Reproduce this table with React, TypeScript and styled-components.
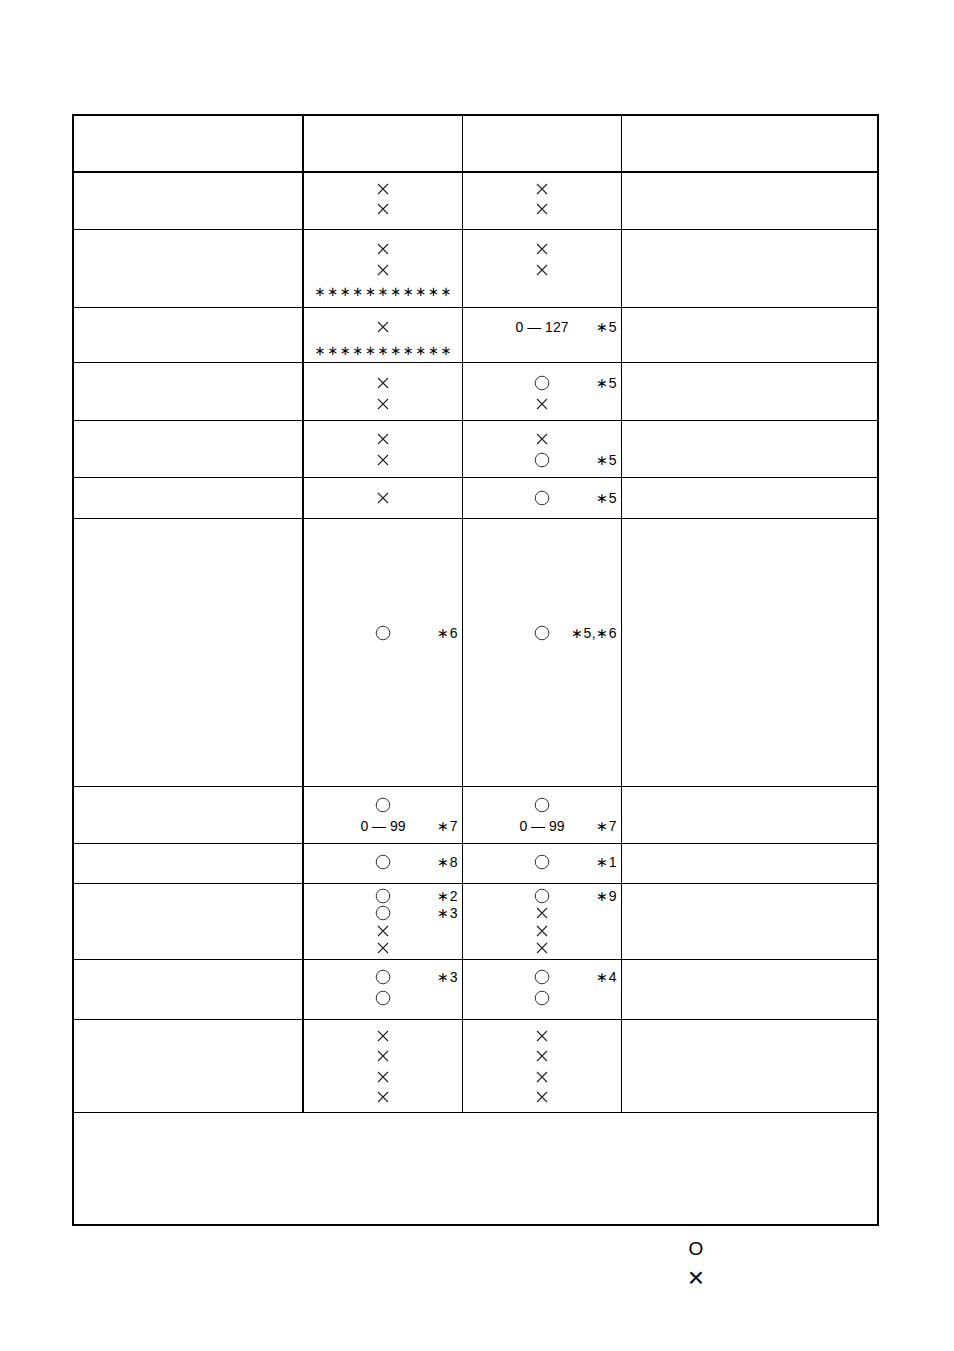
import styled, { createGlobalStyle } from 'styled-components';

const GlobalStyle = createGlobalStyle`
  html, body {
    margin: 0;
    padding: 0;
    background: #fff;
  }
  body {
    font-family: 'Liberation Sans', Arial, sans-serif;
    color: #000;
  }
`;

type Mark = 'o' | 'x' | 'stars' | string;

interface Line {
  mark?: Mark;
  note?: string;
}

interface RowData {
  height: number;
  pad: number;
  lh: number;
  a: Line[];
  b: Line[];
}

const rows: RowData[] = [
  { height: 57, pad: 6, lh: 20, a: [{ mark: 'x' }, { mark: 'x' }], b: [{ mark: 'x' }, { mark: 'x' }] },
  {
    height: 78,
    pad: 8,
    lh: 21,
    a: [{ mark: 'x' }, { mark: 'x' }, { mark: 'stars' }],
    b: [{ mark: 'x' }, { mark: 'x' }],
  },
  {
    height: 55,
    pad: 8,
    lh: 22,
    a: [{ mark: 'x' }, { mark: 'stars' }],
    b: [{ mark: '0 — 127', note: '∗5' }],
  },
  {
    height: 58,
    pad: 9,
    lh: 21,
    a: [{ mark: 'x' }, { mark: 'x' }],
    b: [{ mark: 'o', note: '∗5' }, { mark: 'x' }],
  },
  {
    height: 57,
    pad: 7,
    lh: 21,
    a: [{ mark: 'x' }, { mark: 'x' }],
    b: [{ mark: 'x' }, { mark: 'o', note: '∗5' }],
  },
  { height: 41, pad: 10, lh: 20, a: [{ mark: 'x' }], b: [{ mark: 'o', note: '∗5' }] },
  { height: 268, pad: 104, lh: 20, a: [{ mark: 'o', note: '∗6' }], b: [{ mark: 'o', note: '∗5,∗6' }] },
  {
    height: 57,
    pad: 7,
    lh: 21,
    a: [{ mark: 'o' }, { mark: '0 — 99', note: '∗7' }],
    b: [{ mark: 'o' }, { mark: '0 — 99', note: '∗7' }],
  },
  { height: 40, pad: 8, lh: 20, a: [{ mark: 'o', note: '∗8' }], b: [{ mark: 'o', note: '∗1' }] },
  {
    height: 76,
    pad: 3,
    lh: 17.5,
    a: [{ mark: 'o', note: '∗2' }, { mark: 'o', note: '∗3' }, { mark: 'x' }, { mark: 'x' }],
    b: [{ mark: 'o', note: '∗9' }, { mark: 'x' }, { mark: 'x' }, { mark: 'x' }],
  },
  {
    height: 60,
    pad: 6,
    lh: 21,
    a: [{ mark: 'o', note: '∗3' }, { mark: 'o' }],
    b: [{ mark: 'o', note: '∗4' }, { mark: 'o' }],
  },
  {
    height: 93,
    pad: 6,
    lh: 20.3,
    a: [{ mark: 'x' }, { mark: 'x' }, { mark: 'x' }, { mark: 'x' }],
    b: [{ mark: 'x' }, { mark: 'x' }, { mark: 'x' }, { mark: 'x' }],
  },
];

const Page = styled.div`
  padding: 114px 0 40px 72px;
`;

const Frame = styled.div`
  width: 807px;
  box-sizing: border-box;
  border: 2px solid #000;
`;

const Row = styled.div<{ $h: number; $thick?: boolean }>`
  display: grid;
  grid-template-columns: 230px 159px 159px 1fr;
  height: ${(p) => p.$h}px;
  box-sizing: border-box;
  border-bottom: ${(p) => (p.$thick ? 2 : 1)}px solid #000;
`;

const Cell = styled.div<{ $thick?: boolean; $last?: boolean; $pad?: number }>`
  box-sizing: border-box;
  border-right: ${(p) => (p.$last ? 'none' : `${p.$thick ? 2 : 1}px solid #000`)};
  padding: ${(p) => p.$pad ?? 0}px 4px 0 4px;
  display: flex;
  flex-direction: column;
`;

const Footer = styled.div`
  height: 111px;
`;

const MarkLine = styled.div<{ $lh: number }>`
  display: grid;
  grid-template-columns: 1fr auto 1fr;
  align-items: center;
  height: ${(p) => p.$lh}px;
`;

const Center = styled.div`
  grid-column: 2;
  display: flex;
  align-items: center;
  justify-content: center;
`;

const Note = styled.span`
  grid-column: 3;
  justify-self: end;
  font-size: 14px;
  letter-spacing: 0.5px;
  white-space: nowrap;
`;

const Range = styled.span`
  font-size: 14px;
  white-space: nowrap;
`;

const Stars = styled.span`
  font-family: 'DejaVu Sans', sans-serif;
  font-size: 13px;
  letter-spacing: 1.7px;
  margin-right: -1.7px;
  padding-top: 2px;
  white-space: nowrap;
`;

const Legend = styled.div`
  margin: 8px 0 0 616px;
  display: flex;
  flex-direction: column;
  align-items: center;
  width: 16px;
`;

const LegendItem = styled.div<{ $size: number }>`
  height: 29px;
  line-height: 29px;
  font-size: ${(p) => p.$size}px;
`;

const Circle = () => (
  <svg width="16" height="16" viewBox="0 0 16 16">
    <circle cx="8" cy="8" r="6.8" fill="none" stroke="#333" strokeWidth="1" />
  </svg>
);

const Cross = () => (
  <svg width="12" height="12" viewBox="0 0 12 12">
    <path d="M1 1 L11 11 M11 1 L1 11" stroke="#222" strokeWidth="1.1" fill="none" />
  </svg>
);

const MarkContent = ({ mark }: { mark?: Mark }) => {
  if (mark === 'o') return <Circle />;
  if (mark === 'x') return <Cross />;
  if (mark === 'stars') return <Stars>∗∗∗∗∗∗∗∗∗∗∗</Stars>;
  return <Range>{mark}</Range>;
};

const Lines = ({ lines, lh }: { lines: Line[]; lh: number }) => (
  <>
    {lines.map((l, i) => (
      <MarkLine key={i} $lh={lh}>
        <Center>
          <MarkContent mark={l.mark} />
        </Center>
        {l.note && <Note>{l.note}</Note>}
      </MarkLine>
    ))}
  </>
);

export default function App() {
  return (
    <>
      <GlobalStyle />
      <Page>
        <Frame>
          <Row $h={57} $thick>
            <Cell $thick />
            <Cell />
            <Cell />
            <Cell $last />
          </Row>
          {rows.map((r, i) => (
            <Row key={i} $h={r.height}>
              <Cell $thick />
              <Cell $pad={r.pad}>
                <Lines lines={r.a} lh={r.lh} />
              </Cell>
              <Cell $pad={r.pad}>
                <Lines lines={r.b} lh={r.lh} />
              </Cell>
              <Cell $last />
            </Row>
          ))}
          <Footer />
        </Frame>
        <Legend>
          <LegendItem $size={19}>O</LegendItem>
          <LegendItem $size={28}>×</LegendItem>
        </Legend>
      </Page>
    </>
  );
}
